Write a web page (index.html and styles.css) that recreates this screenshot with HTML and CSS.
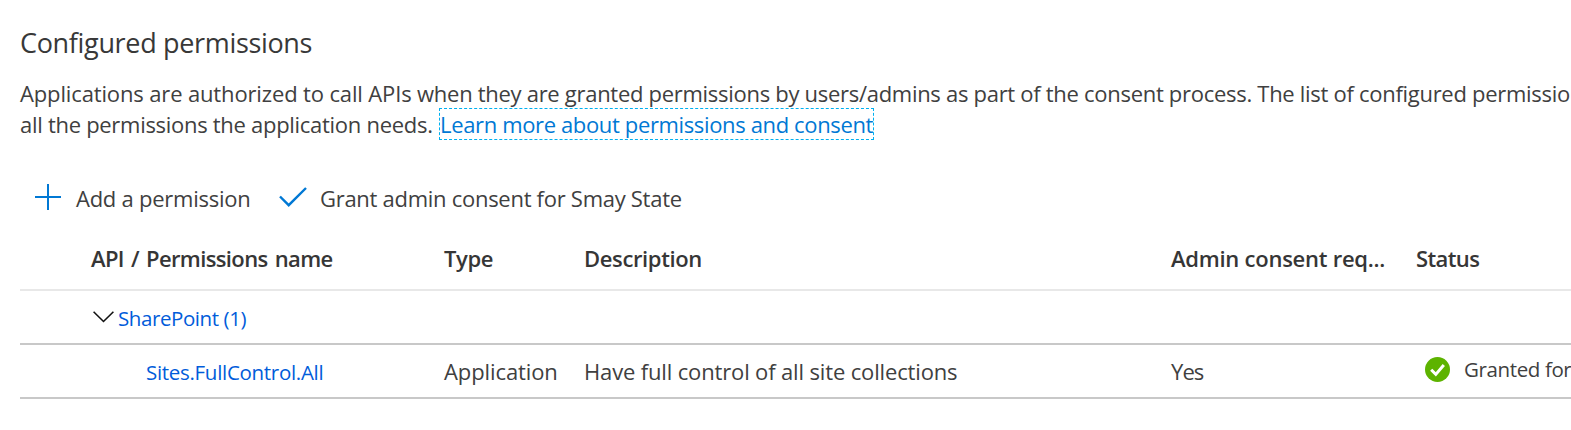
FILE: index.html
```html
<!DOCTYPE html>
<html lang="en">
<head>
<meta charset="utf-8">
<title>Configured permissions</title>
<link rel="stylesheet" href="styles.css">
</head>
<body>
<main class="page">
  <h1 class="title">Configured permissions</h1>
  <p class="intro"><span class="line"><span class="lead">Applications are authorized to call APIs </span>when they are granted permissions by users/admins as part of the consent process. The list of configured permissio</span><span class="line">all the permissions the application needs. <a class="learn" href="#">Learn more about permissions and consent</a></span></p>
  <div class="toolbar">
    <svg class="icon-plus" viewBox="0 0 26 26"><path d="M13 0V26M0 13H26" fill="none" stroke="#0078d4" stroke-width="2"/></svg>
    <span class="add">Add a permission</span>
    <svg class="icon-check" viewBox="0 0 28 20"><path d="M1 9.5L9.7 18.2L27 1" fill="none" stroke="#0078d4" stroke-width="2.4"/></svg>
    <span class="grant">Grant admin consent for Smay State</span>
  </div>
  <div class="table">
    <div class="row head">
      <span class="h-name">API / Permissions name</span><span>Type</span><span>Description</span><span class="h-admin">Admin consent req...</span><span class="h-status">Status</span>
    </div>
    <div class="row group">
      <div class="group-name"><svg class="chevron" viewBox="0 0 21 12"><path d="M.6 .8L10.5 10.5L20.4 .8" fill="none" stroke="#111" stroke-width="1.6"/></svg><a class="api" href="#">SharePoint (1)</a></div>
    </div>
    <div class="row item">
      <a class="perm" href="#">Sites.FullControl.All</a><span class="type">Application</span><span class="desc">Have full control of all site collections</span><span class="yes">Yes</span>
      <div class="status"><svg class="icon-ok" viewBox="0 0 25 25"><circle cx="12.5" cy="12.5" r="12.5" fill="#5db300"/><path d="M6.2 12.8L10.8 17.4L18.8 8" fill="none" stroke="#fff" stroke-width="3"/></svg><span class="granted">Granted for</span></div>
    </div>
  </div>
</main>
</body>
</html>
```
FILE: styles.css
```css
* { box-sizing: border-box; }
body { margin: 0; background: #fff; overflow: hidden; }
.page { width: 1571px; height: 430px; overflow: hidden; padding: 25px 0 0 20px; font-family: "Open Sans", "Noto Sans", sans-serif; font-size: 22px; letter-spacing: -.25px; color: #404040; white-space: nowrap; }
a { text-decoration: none; }
.title { margin: 0; font-size: 27px; line-height: 36px; font-weight: 400; letter-spacing: -.33px; color: #383838; }
.intro { margin: 17px 0 0; line-height: 31px; }
.line { display: block; letter-spacing: -.29px; }
.lead { letter-spacing: -.14px; }
.learn { margin-left: 2px; color: #0078d4; letter-spacing: -.36px; outline: 1px dashed #00b0f0; }
.toolbar { display: flex; align-items: center; height: 40px; margin-top: 38px; padding-left: 15px; }
.icon-plus { width: 26px; height: 26px; margin-right: 15px; margin-top: -2px; }
.add { width: 203px; }
.icon-check { width: 28px; height: 20px; margin-right: 13px; margin-top: -2px; }
.grant { letter-spacing: -.28px; }
.row { display: grid; grid-template-columns: 353px 140px 587px 245px 1fr; align-items: center; padding-left: 71px; }
.head { height: 73px; border-bottom: 2px solid #e8e8e8; font-weight: 600; letter-spacing: -.37px; color: #363636; padding-top: 8px; }
.h-name { letter-spacing: -.63px; word-spacing: 2px; }
.h-admin { letter-spacing: -.25px; }
.h-status { letter-spacing: -.6px; }
.group { height: 54px; border-bottom: 2px solid #c8c8c8; }
.group-name { display: flex; align-items: center; padding-left: 2px; }
.chevron { width: 21px; height: 12px; margin-right: 4px; }
.api, .perm { font-size: 20.5px; color: #015cda; }
.api { letter-spacing: -.42px; padding-top: 1px; }
.perm { letter-spacing: -.3px; padding: 2px 0 0 55px; }
.item { height: 54px; border-bottom: 2px solid #c8c8c8; }
.type { letter-spacing: -.1px; }
.desc { letter-spacing: -.15px; }
.yes { letter-spacing: -.9px; }
.status { display: flex; align-items: center; padding: 0 0 3px 9px; }
.icon-ok { width: 25px; height: 25px; margin-right: 14px; flex: none; }
.granted { font-size: 20.5px; letter-spacing: -.38px; padding-bottom: 2px; }
```
